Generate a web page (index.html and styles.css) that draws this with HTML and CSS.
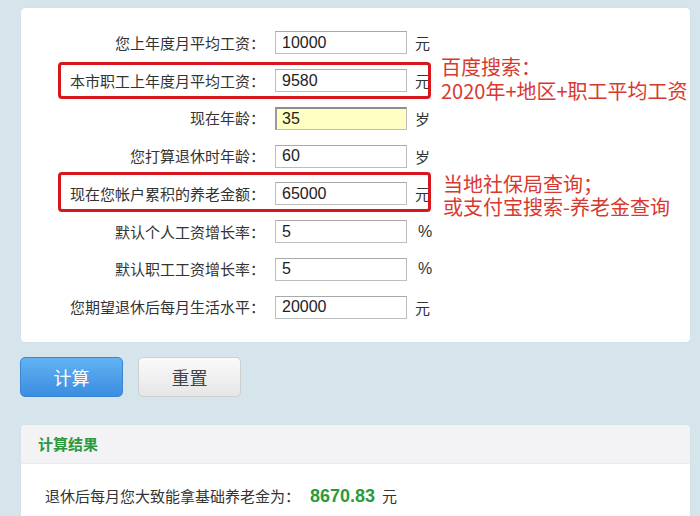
FILE: index.html
```html
<!DOCTYPE html>
<html lang="zh-CN">
<head>
    <meta charset="UTF-8">
    <title>养老金计算器</title>
    <link rel="stylesheet" href="styles.css">
</head>
<body>

<div class="panel form-panel">
    <div class="row">
        <label>您上年度月平均工资：</label>
        <input type="text" value="10000">
        <span class="unit">元</span>
    </div>
    <div class="row marked marked-a">
        <label>本市职工上年度月平均工资：</label>
        <input type="text" value="9580">
        <span class="unit">元</span>
        <div class="note note-a">
            <div>百度搜索：</div>
            <div>2020年+地区+职工平均工资</div>
        </div>
    </div>
    <div class="row">
        <label>现在年龄：</label>
        <input type="text" value="35" class="focus">
        <span class="unit">岁</span>
    </div>
    <div class="row">
        <label>您打算退休时年龄：</label>
        <input type="text" value="60">
        <span class="unit">岁</span>
    </div>
    <div class="row marked marked-b">
        <label>现在您帐户累积的养老金额：</label>
        <input type="text" value="65000">
        <span class="unit">元</span>
        <div class="note note-b">
            <div>当地社保局查询；</div>
            <div>或支付宝搜索-养老金查询</div>
        </div>
    </div>
    <div class="row">
        <label>默认个人工资增长率：</label>
        <input type="text" value="5">
        <span class="unit pct">%</span>
    </div>
    <div class="row">
        <label>默认职工工资增长率：</label>
        <input type="text" value="5">
        <span class="unit pct">%</span>
    </div>
    <div class="row">
        <label>您期望退休后每月生活水平：</label>
        <input type="text" value="20000">
        <span class="unit">元</span>
    </div>
</div>

<div class="actions">
    <button class="btn btn-calc">计算</button>
    <button class="btn btn-reset">重置</button>
</div>

<div class="panel result-panel">
    <div class="result-head">计算结果</div>
    <div class="result-body">
        退休后每月您大致能拿基础养老金为：<span class="amount">8670.83</span>元
    </div>
</div>

</body>
</html>
```

FILE: styles.css
```css
body {
    margin: 0;
    background-color: #d5e5eb;
    font-family: "Noto Sans CJK SC", sans-serif;
    color: #333;
    font-size: 15px;
    overflow: hidden;
}
.panel {
    background-color: #fff;
    margin: 0 10px 0 21px;
    border-radius: 4px;
    box-shadow: 0 0 1px rgba(0, 0, 0, 0.15);
}
.form-panel {
    margin-top: 8px;
    padding: 16px 0;
}
.row {
    position: relative;
    display: flex;
    align-items: center;
    height: 37.75px;
}
.row label {
    width: 244px;
    text-align: right;
    flex-shrink: 0;
    line-height: 20px;
}
.row input {
    margin-left: 10px;
    width: 132px;
    height: 23px;
    box-sizing: border-box;
    border: 1px solid #bdbdbd;
    border-top-color: #a9a9a9;
    padding: 0 6px;
    font-family: "Liberation Sans", Arial, sans-serif;
    font-size: 16px;
    color: #222;
    background: #fff;
    outline: none;
}
.row input.focus {
    background-color: #ffffc4;
    border-top: 2px solid #8e8e8e;
    border-left: 2px solid #9a9a9a;
    padding-left: 5px;
}
.unit {
    margin-left: 8px;
    color: #333;
}
.unit.pct {
    margin-left: 11px;
    font-family: "Liberation Sans", Arial, sans-serif;
    font-size: 16px;
}
.marked::before {
    content: "";
    position: absolute;
    left: 37px;
    width: 373px;
    border: 3px solid #d8161d;
    border-radius: 4px;
    box-sizing: border-box;
}
.marked-a::before {
    top: 0;
    height: 37px;
}
.marked-b::before {
    top: -3px;
    height: 40px;
}
.note {
    position: absolute;
    left: 420px;
    color: #d9382e;
    font-size: 20px;
    white-space: nowrap;
}
.note div {
    height: 24px;
    line-height: 24px;
}
.note-a {
    top: -7px;
}
.note-b {
    top: -3px;
    left: 422px;
}
.note-b div {
    height: 23px;
    line-height: 23px;
}
.actions {
    display: flex;
    gap: 15px;
    margin: 15px 0 28px 20px;
}
.btn {
    width: 103px;
    height: 40px;
    border-radius: 5px;
    font-family: "Noto Sans CJK SC", sans-serif;
    font-size: 18px;
    cursor: pointer;
}
.btn-calc {
    color: #fff;
    background: linear-gradient(#62b2f4, #3b8de0);
    border: 1px solid #3a85cf;
}
.btn-reset {
    color: #444;
    background: linear-gradient(#fafafa, #e6e6e6);
    border: 1px solid #cfcfcf;
}
.result-panel {
    height: 91px;
    border-radius: 4px 4px 0 0;
}
.result-head {
    height: 38px;
    line-height: 38px;
    padding-left: 17px;
    background-color: #f3f2f4;
    border-bottom: 1px solid #ebebeb;
    color: #2b9a3c;
    font-weight: bold;
    border-radius: 4px 4px 0 0;
}
.result-body {
    padding: 20px 0 0 24px;
    line-height: 24px;
}
.amount {
    margin: 0 7px 0 10px;
    color: #2b9a3c;
    font-weight: bold;
    font-family: "Liberation Sans", Arial, sans-serif;
    font-size: 18px;
}
```
